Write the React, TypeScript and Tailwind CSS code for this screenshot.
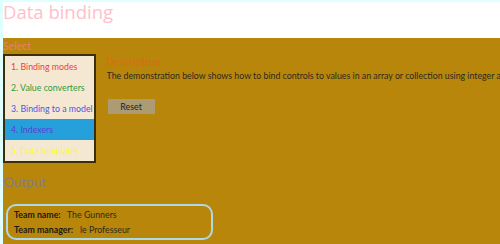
const items = [
  { label: "1. Binding modes", color: "text-[#f03c3c]" },
  { label: "2. Value converters", color: "text-[#2f9a3a]" },
  { label: "3. Binding to a model", color: "text-[#5252e6]" },
  { label: "4. Indexers", color: "text-[#5a3fd6]", selected: true },
  { label: "5. Data templates", color: "text-[#ffff00]" },
];

export default function App() {
  return (
    <div className="min-h-[244px] bg-[#e0ffff] pl-[3px] pt-[2px] font-['Lato',sans-serif] flex flex-col">
      {/* Header */}
      <div className="h-[36px] bg-white">
        <h1 className="font-['Open_Sans',sans-serif] text-[18.5px] leading-[20px] text-[#ffc0cb]">Data binding</h1>
      </div>

      {/* Main area */}
      <div className="flex-1 bg-[#b8860b] flex flex-col">
        <div className="text-[10.5px] leading-[14px] text-[#e9826b] mt-[1px]">Select</div>

        <div className="flex mt-[1px]">
          <div className="w-[95px] h-[109px] border-2 border-[#3b2e0a] bg-[#f5e8d3] flex flex-col">
            {items.map((it) => (
              <div
                key={it.label}
                className={`h-[21px] flex items-center pl-[6px] text-[8.8px] whitespace-nowrap ${it.color} ${
                  it.selected ? "bg-[#26a0da]" : ""
                }`}
              >
                {it.label}
              </div>
            ))}
          </div>

          <div className="ml-[11px] flex flex-col overflow-hidden">
            <div className="mt-[1px] text-[10.5px] leading-[14px] text-[#d96d12]">Description</div>
            <p className="mt-[1px] text-[8.8px] leading-[12px] text-[#2e2a1c] whitespace-nowrap">
              The demonstration below shows how to bind controls to values in an array or collection using integer and
            </p>
            <button className="mt-[17px] ml-[1px] w-[47px] h-[15px] bg-[#ab9c73] text-[8.8px] text-[#222] flex items-center justify-center">
              Reset
            </button>
          </div>
        </div>

        <div className="mt-[10px] text-[13.5px] leading-[18px] text-[#808080]">Output</div>

        <div className="mt-[13px] ml-[3px] w-[207px] h-[36px] border-2 border-[#add8e6] rounded-[10px] flex flex-col justify-center gap-[3px] pl-[6px] text-[8.8px] leading-[12px] text-[#2e2a1c]">
          <div className="flex">
            <span className="font-bold text-[#1c1a10] w-[53px]">Team name:</span>
            <span>The Gunners</span>
          </div>
          <div className="flex">
            <span className="font-bold text-[#1c1a10] w-[66px]">Team manager:</span>
            <span>le Professeur</span>
          </div>
        </div>
      </div>
    </div>
  );
}
